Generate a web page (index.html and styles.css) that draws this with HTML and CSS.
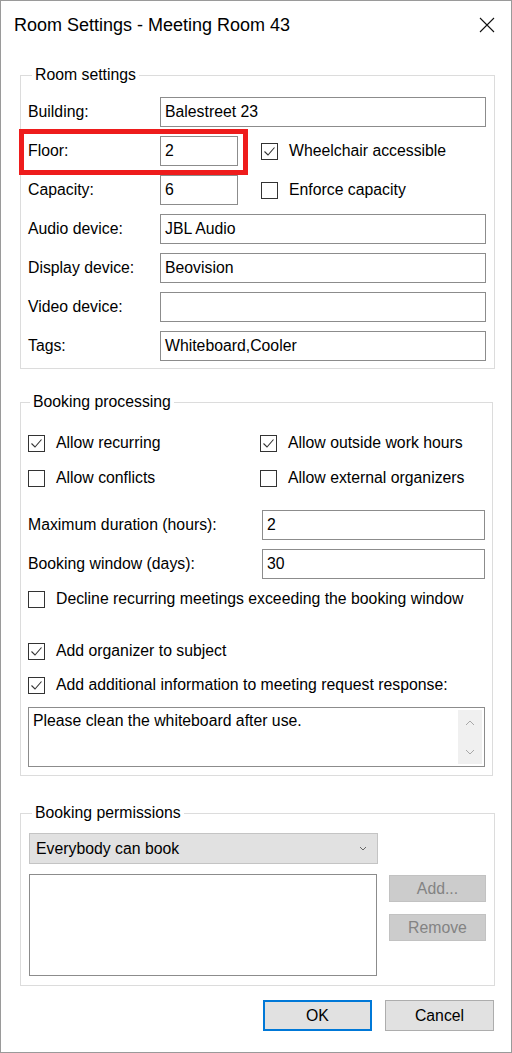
FILE: index.html
```html
<!DOCTYPE html>
<html lang="en">
<head>
<meta charset="utf-8">
<title>Room Settings - Meeting Room 43</title>
<link rel="stylesheet" href="styles.css">
</head>
<body>
<div class="window">
  <div class="titlebar">
    <span class="title">Room Settings - Meeting Room 43</span>
    <svg class="close" width="16" height="16" viewBox="0 0 16 16"><path d="M1 1 L15 15 M15 1 L1 15" stroke="#111" stroke-width="1.1" fill="none"/></svg>
  </div>

  <section class="group g-room">
    <div class="legend">Room settings</div>
    <div class="rows">
      <div class="row"><span class="lbl">Building:</span><div class="input grow">Balestreet 23</div></div>
      <div class="row floor-row">
        <span class="lbl">Floor:</span><div class="input short">2</div>
        <div class="check side"><span class="box"><svg width="15" height="15" viewBox="0 0 15 15"><path d="M2.5 7.5 L6 11 L12.5 3.5" stroke="#333" stroke-width="1.1" fill="none"/></svg></span><span>Wheelchair accessible</span></div>
        <div class="highlight"></div>
      </div>
      <div class="row">
        <span class="lbl">Capacity:</span><div class="input short">6</div>
        <div class="check side"><span class="box"></span><span>Enforce capacity</span></div>
      </div>
      <div class="row"><span class="lbl">Audio device:</span><div class="input grow">JBL Audio</div></div>
      <div class="row"><span class="lbl">Display device:</span><div class="input grow">Beovision</div></div>
      <div class="row"><span class="lbl">Video device:</span><div class="input grow"></div></div>
      <div class="row"><span class="lbl">Tags:</span><div class="input grow">Whiteboard,Cooler</div></div>
    </div>
  </section>

  <section class="group g-booking">
    <div class="legend">Booking processing</div>
    <div class="checkgrid">
      <div class="check"><span class="box"><svg width="15" height="15" viewBox="0 0 15 15"><path d="M2.5 7.5 L6 11 L12.5 3.5" stroke="#333" stroke-width="1.1" fill="none"/></svg></span><span>Allow recurring</span></div>
      <div class="check"><span class="box"><svg width="15" height="15" viewBox="0 0 15 15"><path d="M2.5 7.5 L6 11 L12.5 3.5" stroke="#333" stroke-width="1.1" fill="none"/></svg></span><span>Allow outside work hours</span></div>
      <div class="check"><span class="box"></span><span>Allow conflicts</span></div>
      <div class="check"><span class="box"></span><span>Allow external organizers</span></div>
    </div>
    <div class="num-rows">
      <div class="row"><span class="lbl wide">Maximum duration (hours):</span><div class="input grow">2</div></div>
      <div class="row"><span class="lbl wide">Booking window (days):</span><div class="input grow">30</div></div>
    </div>
    <div class="check single decline"><span class="box"></span><span>Decline recurring meetings exceeding the booking window</span></div>
    <div class="check single organizer"><span class="box"><svg width="15" height="15" viewBox="0 0 15 15"><path d="M2.5 7.5 L6 11 L12.5 3.5" stroke="#333" stroke-width="1.1" fill="none"/></svg></span><span>Add organizer to subject</span></div>
    <div class="check single additional"><span class="box"><svg width="15" height="15" viewBox="0 0 15 15"><path d="M2.5 7.5 L6 11 L12.5 3.5" stroke="#333" stroke-width="1.1" fill="none"/></svg></span><span>Add additional information to meeting request response:</span></div>
    <div class="textarea">
      <div class="ta-text">Please clean the whiteboard after use.</div>
      <div class="scrollbar">
        <svg width="10" height="6" viewBox="0 0 10 6"><path d="M1 5 L5 1 L9 5" stroke="#a8a8a8" stroke-width="1" fill="none"/></svg>
        <svg width="10" height="6" viewBox="0 0 10 6"><path d="M1 1 L5 5 L9 1" stroke="#a8a8a8" stroke-width="1" fill="none"/></svg>
      </div>
    </div>
  </section>

  <section class="group g-perm">
    <div class="legend">Booking permissions</div>
    <div class="dropdown">
      <span>Everybody can book</span>
      <svg width="8" height="5" viewBox="0 0 8 5"><path d="M1 1 L4 4 L7 1" stroke="#666" stroke-width="1" fill="none"/></svg>
    </div>
    <div class="perm-body">
      <div class="listbox"></div>
      <div class="side-buttons">
        <div class="btn disabled">Add...</div>
        <div class="btn disabled">Remove</div>
      </div>
    </div>
  </section>

  <div class="footer">
    <div class="btn main default">OK</div>
    <div class="btn main">Cancel</div>
  </div>
</div>
</body>
</html>
```

FILE: styles.css
```css
html, body {
  margin: 0;
  padding: 0;
  background: #fff;
}

.window {
  width: 512px;
  height: 1053px;
  box-sizing: border-box;
  border: 1px solid #9a9a9a;
  background: #fff;
  font-family: "Liberation Sans", Arial, sans-serif;
  font-size: 15.8px;
  line-height: 20px;
  color: #000;
}

.titlebar {
  height: 48px;
  display: flex;
  align-items: center;
  justify-content: space-between;
  padding: 0 16px 0 13px;
}

.title {
  font-size: 18px;
  line-height: 24px;
}

.close {
  display: block;
  margin-top: -1px;
}

.group {
  border: 1px solid #dcdcdc;
  margin-left: 19px;
  box-sizing: border-box;
  padding: 0 8px 0 7px;
}

.legend {
  margin: -11px 0 0 4px;
  padding: 0 3px;
  width: fit-content;
  background: #fff;
  line-height: 20px;
}

.g-room {
  margin-top: 26px;
  width: 475px;
  padding-bottom: 7px;
}

.rows {
  margin-top: 12px;
  display: flex;
  flex-direction: column;
  gap: 9px;
}

.row {
  display: flex;
  align-items: center;
  height: 30px;
}

.floor-row {
  position: relative;
}

.lbl {
  width: 132px;
  flex: none;
  white-space: nowrap;
}

.lbl.wide {
  width: 234px;
}

.input {
  height: 30px;
  box-sizing: border-box;
  border: 1px solid #8c8c8c;
  padding: 0 4px;
  display: flex;
  align-items: center;
  background: #fff;
  white-space: nowrap;
}

.input.grow {
  flex: 1;
}

.input.short {
  width: 78px;
}

.check {
  display: flex;
  align-items: center;
  gap: 11px;
  height: 20px;
  white-space: nowrap;
}

.check.side {
  margin-left: 23px;
}

.box {
  width: 17px;
  height: 17px;
  box-sizing: border-box;
  border: 1px solid #333;
  background: #fff;
  flex: none;
  display: flex;
  align-items: center;
  justify-content: center;
}

.box svg {
  display: block;
}

.highlight {
  position: absolute;
  left: -9px;
  top: -7px;
  width: 229px;
  height: 46px;
  box-sizing: border-box;
  border: 5px solid #ee1c1c;
  pointer-events: none;
}

.g-booking {
  margin-top: 33px;
  width: 473px;
  padding-bottom: 8px;
}

.g-booking .legend {
  margin-left: 2px;
}

.checkgrid {
  margin-top: 21px;
  display: grid;
  grid-template-columns: 232px 1fr;
  row-gap: 15px;
}

.num-rows {
  margin-top: 22px;
  display: flex;
  flex-direction: column;
  gap: 9px;
}

.num-rows .input {
  margin-right: -1px;
}

.check.single.decline {
  margin-top: 10px;
}

.check.single.organizer {
  margin-top: 32px;
}

.check.single.additional {
  margin-top: 14px;
}

.textarea {
  margin-top: 12px;
  height: 60px;
  width: 457px;
  box-sizing: border-box;
  border: 1px solid #8c8c8c;
  display: flex;
  justify-content: space-between;
}

.ta-text {
  padding: 3px 4px;
}

.scrollbar {
  width: 24px;
  margin: 2px 2px 2px 0;
  background: #f0f0f0;
  display: flex;
  flex-direction: column;
  align-items: center;
  justify-content: space-between;
  padding: 10px 0 9px;
  box-sizing: border-box;
}

.scrollbar svg {
  display: block;
}

.g-perm {
  margin-top: 37px;
  width: 475px;
  padding: 0 8px 9px 8px;
}

.g-perm .legend {
  margin-left: 3px;
}

.dropdown {
  margin-top: 10px;
  width: 349px;
  height: 31px;
  box-sizing: border-box;
  background: #e1e1e1;
  border: 1px solid #c4c4c4;
  display: flex;
  align-items: center;
  justify-content: space-between;
  padding: 0 10px 0 6px;
}

.dropdown svg {
  display: block;
}

.perm-body {
  margin-top: 10px;
  display: flex;
  gap: 12px;
}

.listbox {
  width: 349px;
  height: 102px;
  box-sizing: border-box;
  border: 1px solid #8c8c8c;
  background: #fff;
}

.side-buttons {
  display: flex;
  flex-direction: column;
  gap: 12px;
  padding-top: 1px;
}

.btn {
  box-sizing: border-box;
  display: flex;
  align-items: center;
  justify-content: center;
  white-space: nowrap;
}

.btn.disabled {
  width: 97px;
  height: 27px;
  background: #cccccc;
  border: 1px solid #c2c2c2;
  color: #838383;
}

.footer {
  margin-top: 14px;
  display: flex;
  justify-content: flex-end;
  gap: 13px;
  padding-right: 17px;
}

.btn.main {
  width: 109px;
  height: 31px;
  background: #e1e1e1;
  border: 1px solid #adadad;
}

.btn.main.default {
  border: 2px solid #0078d7;
}
```
